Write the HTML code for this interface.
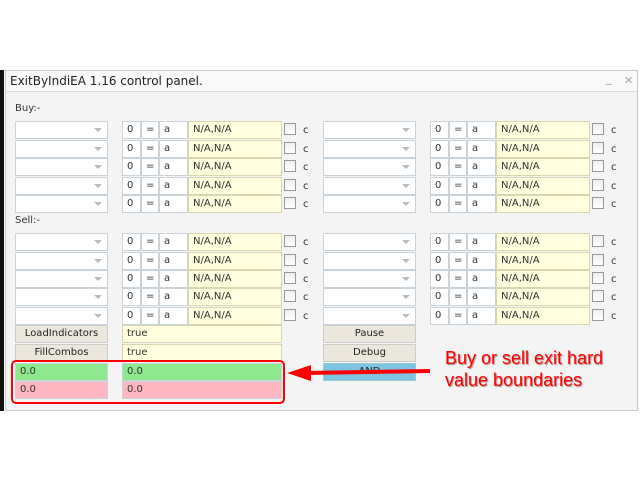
<!DOCTYPE html><html><head><style>
body{margin:0;width:640px;height:480px;background:#fff;position:relative;overflow:hidden;font-family:"DejaVu Sans","Liberation Sans",sans-serif;}
.a{position:absolute;box-sizing:border-box}
.win{left:5px;top:70px;width:633px;height:341px;background:#f4f4f4;border:1px solid #c8c8c8}
.f{position:absolute;box-sizing:border-box;border:1px solid #c9d3dc;height:18px;font-size:10px;line-height:16px;padding-left:4px;color:#333;background:#fff}
.y{background:#ffffe0;border-color:#d8d8b0}
.cb{position:absolute;width:12px;height:12px;border:1px solid #999;background:linear-gradient(#eee,#fff);box-sizing:border-box}
.c{position:absolute;font-size:10px;color:#333}
.btn{position:absolute;box-sizing:border-box;height:18px;background:#ebe7dc;border:1px solid #ccc;font-size:10px;line-height:16px;text-align:center;color:#222}
.arr{position:absolute;width:0;height:0;border-left:4px solid transparent;border-right:4px solid transparent;border-top:4px solid #bbb}
</style></head><body>
<div class="a" style="left:0;top:70px;width:4px;height:341px;background:#111"></div>
<div class="a win"></div>
<div class="a" style="left:6px;top:71px;width:631px;height:21px;background:#f9f9f9;border-bottom:1px solid #ddd"></div>
<div class="a" style="left:10px;top:74px;font-size:12px;color:#222">ExitByIndiEA 1.16 control panel.</div>
<div class="a" style="left:606px;top:72px;font-size:11px;color:#999">_</div>
<div class="a" style="left:624px;top:74px;font-size:11px;color:#aaa">✕</div>
<div class="a" style="left:15px;top:103px;font-size:10px;color:#333">Buy:-</div>
<div class="a" style="left:15px;top:215px;font-size:10px;color:#333">Sell:-</div>
<div id="rows"></div>
<script>
var tops=[121,140,158,177,195,233,252,270,288,307],h='';
tops.forEach(function(t){[0,308].forEach(function(o){
h+='<div class="f" style="left:'+(15+o)+'px;top:'+t+'px;width:93px"></div><div class="arr" style="left:'+(94+o)+'px;top:'+(t+7)+'px"></div>';
h+='<div class="f" style="left:'+(122+o)+'px;top:'+t+'px;width:19px">0</div>';
h+='<div class="f" style="left:'+(141+o)+'px;top:'+t+'px;width:18px">=</div>';
h+='<div class="f" style="left:'+(159+o)+'px;top:'+t+'px;width:29px">a</div>';
h+='<div class="f y" style="left:'+(188+o)+'px;top:'+t+'px;width:94px">N/A,N/A</div>';
h+='<div class="cb" style="left:'+(284+o)+'px;top:'+(t+2)+'px"></div><div class="c" style="left:'+(303+o)+'px;top:'+(t+4)+'px">c</div>';
});});
document.getElementById('rows').innerHTML=h;
</script>
<div class="btn" style="left:15px;top:325px;width:93px">LoadIndicators</div>
<div class="btn" style="left:15px;top:344px;width:93px">FillCombos</div>
<div class="f y" style="left:122px;top:325px;width:160px">true</div>
<div class="f y" style="left:122px;top:344px;width:160px">true</div>
<div class="f" style="left:15px;top:363px;width:93px;background:#8ee88e">0.0</div>
<div class="f" style="left:122px;top:363px;width:160px;background:#8ee88e">0.0</div>
<div class="f" style="left:15px;top:381px;width:93px;background:#ffb6c1">0.0</div>
<div class="f" style="left:122px;top:381px;width:160px;background:#ffb6c1">0.0</div>
<div class="btn" style="left:323px;top:325px;width:93px">Pause</div>
<div class="btn" style="left:323px;top:344px;width:93px">Debug</div>
<div class="btn" style="left:323px;top:363px;width:93px;background:#7fc3e3;border-color:#9cc">AND</div>
<div class="a" style="left:11px;top:360px;width:274px;height:44px;border:2px solid #f00;border-radius:5px"></div>
<svg class="a" style="left:285px;top:360px" width="150" height="25"><line x1="145" y1="11" x2="20" y2="13" stroke="#f00" stroke-width="4"/><polygon points="2,13 26,5 26,21" fill="#f00"/></svg>
<div class="a" style="left:445px;top:347px;font-family:'Liberation Sans',sans-serif;font-size:18px;line-height:22px;color:#f00;text-shadow:1px 1px 1px #a88">Buy or sell exit hard<br>value boundaries</div>
</body></html>
